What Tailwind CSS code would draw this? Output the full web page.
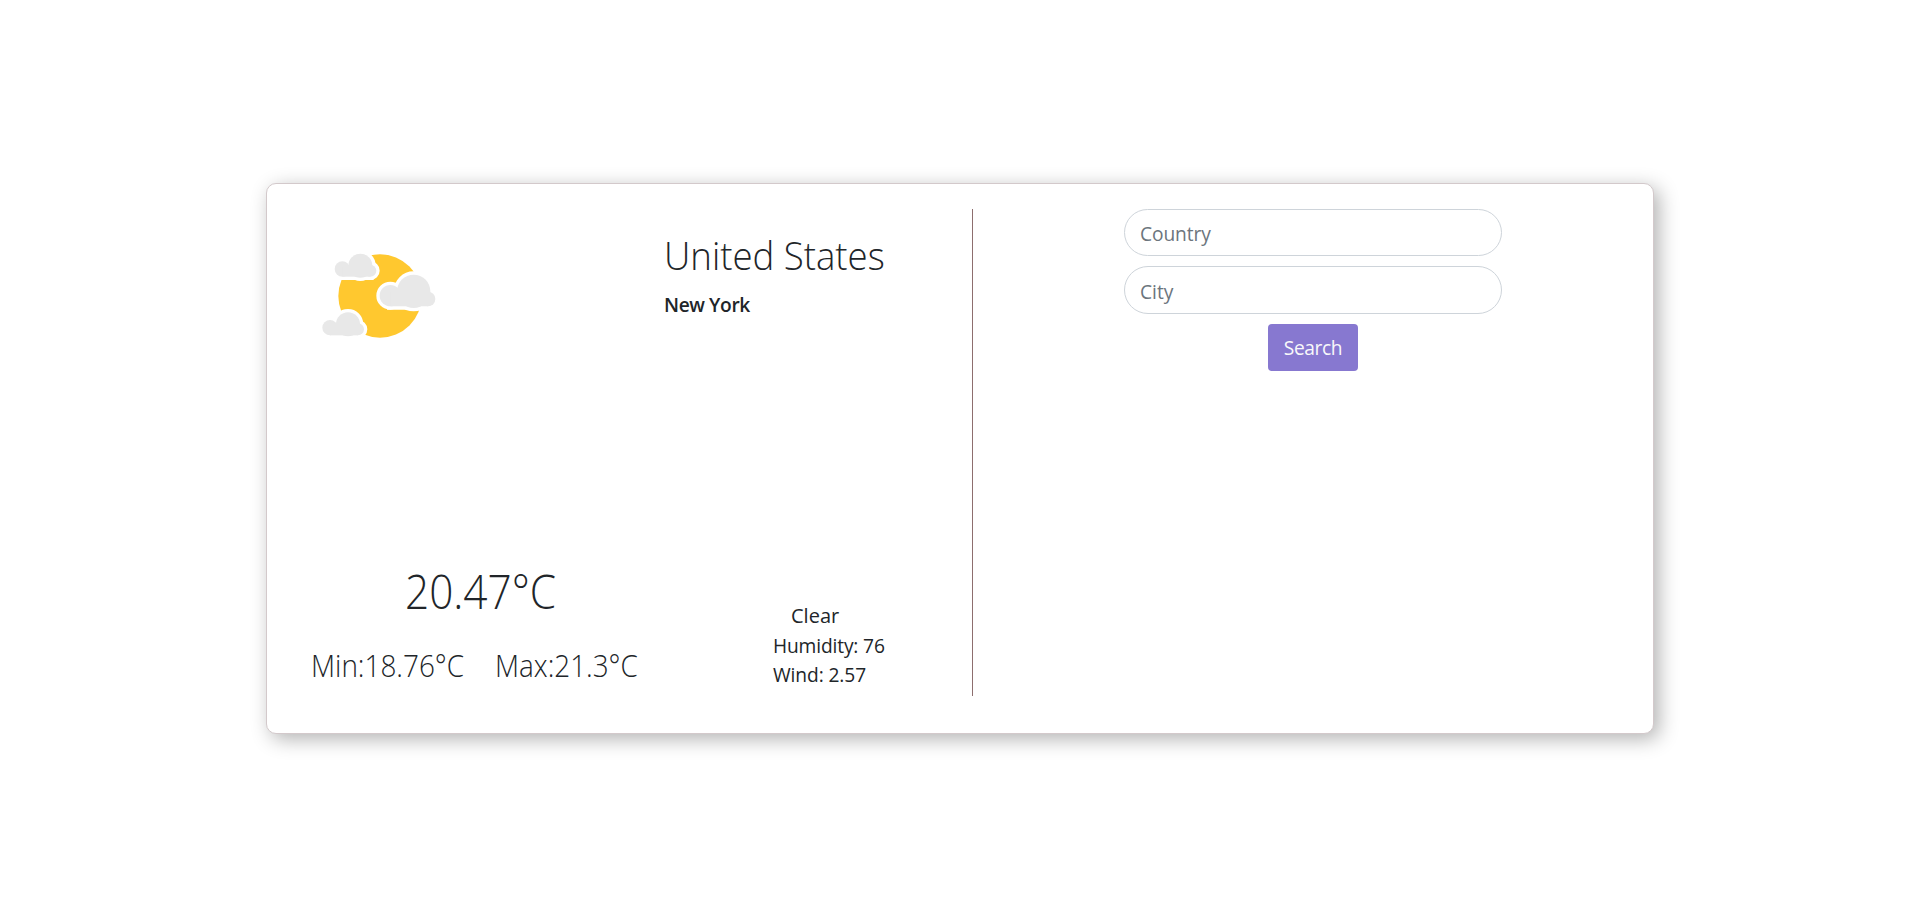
<!DOCTYPE html>
<html lang="en">
<head>
<meta charset="utf-8">
<title>Weather</title>
<script src="https://cdn.jsdelivr.net/npm/@tailwindcss/browser@4"></script>
</head>
<body class="min-h-screen bg-white pt-[183px] font-['Open_Sans',sans-serif] text-[19.2px] leading-[29px] text-[#212529]">
<main class="ml-[266px] flex h-[551px] w-[1388px] items-start rounded-[10px] border border-[#d3c9cb] bg-white pt-[25px] shadow-[5px_5px_20px_#b2b2b2]">
  <section class="flex h-[487px] w-[706px] shrink-0 flex-col justify-between border-r border-[#8d6e6e]">
    <div class="flex items-start">
      <svg class="mt-[41px] ml-[53px] h-[90px] w-[120px] shrink-0" viewBox="210 240 360 270">
        <defs>
          <g id="small"><circle cx="23" cy="47" r="23"/><circle cx="77" cy="37" r="36"/><circle cx="107" cy="52" r="18"/><path d="M23 40H107V70H23Z"/></g>
          <g id="large"><circle cx="32" cy="63" r="32"/><circle cx="102" cy="50" r="50"/><circle cx="145" cy="73" r="22"/><path d="M32 50H145V95H32Z"/></g>
        </defs>
        <circle cx="390" cy="378" r="125" fill="#ffc82f"/>
        <g fill="#fff" stroke="#fff" stroke-width="20">
          <use href="#small" x="254" y="250"/><use href="#large" x="389" y="314"/><use href="#small" x="217" y="426"/>
        </g>
        <g fill="#e8e8e8">
          <use href="#small" x="254" y="250"/><use href="#large" x="389" y="314"/><use href="#small" x="217" y="426"/>
        </g>
      </svg>
      <div class="mt-[22px] ml-[224px]">
        <h1 class="origin-left scale-x-[.938] text-[39px] leading-[48px] font-light whitespace-nowrap">United States</h1>
        <h2 class="mt-[11px] font-semibold tracking-[-0.4px]">New York</h2>
      </div>
    </div>
    <div class="flex items-end">
      <div class="mb-[12px] ml-[44px] w-[462px]">
        <div class="mb-[26px] ml-[94px] origin-left scale-x-[.9] text-[47px] leading-[58px] font-light">20.47°C</div>
        <div class="flex text-[31px] leading-[38px] font-light">
          <div class="w-[184px] origin-left scale-x-[.9]">Min:18.76°C</div>
          <div class="origin-left scale-x-[.898]">Max:21.3°C</div>
        </div>
      </div>
      <div class="mb-[7px]">
        <div class="mb-px ml-[18px] text-[20px]">Clear</div>
        <div class="tracking-[-0.15px]">Humidity: 76</div>
        <div class="tracking-[-0.1px]">Wind: 2.57</div>
      </div>
    </div>
  </section>
  <form class="ml-[151px] flex w-[378px] flex-col items-center gap-[10px]">
    <input class="h-[47px] w-full rounded-[25px] border border-[#ced4da] px-[15px] pt-[2px] tracking-[-0.1px] placeholder:text-[#6c757d]" placeholder="Country">
    <input class="h-[48px] w-full rounded-[25px] border border-[#ced4da] px-[15px] pt-[2px] placeholder:text-[#6c757d]" placeholder="City">
    <button type="button" class="h-[47px] w-[90px] rounded-[4px] bg-[#8778d0] tracking-[-0.4px] text-[#f8f9fa]">Search</button>
  </form>
</main>
</body>
</html>
